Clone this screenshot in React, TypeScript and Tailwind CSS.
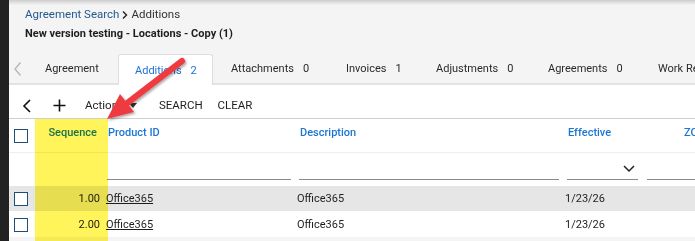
import React from "react";

const Checkbox = () => (
  <div className="w-[14px] h-[14px] border-[1.5px] border-[#1f4e79] bg-white" />
);

const tabs: { label: string; count?: string; w: string; active?: boolean }[] = [
  { label: "Agreement", w: "w-[91px]" },
  { label: "Additions", count: "2", w: "w-[95px]", active: true },
  { label: "Attachments", count: "0", w: "w-[115px]" },
  { label: "Invoices", count: "1", w: "w-[90px]" },
  { label: "Adjustments", count: "0", w: "w-[112px]" },
  { label: "Agreements", count: "0", w: "w-[110px]" },
  { label: "Work Requests", w: "w-[120px]" },
];

export default function App() {
  return (
    <div
      className="w-[695px] h-[241px] overflow-hidden flex relative bg-[#f4f4f4]"
      style={{ fontFamily: "Roboto, 'Liberation Sans', sans-serif" }}
    >
      <div className="w-[9px] shrink-0 bg-[#222222]" />
      <div className="flex-1 flex flex-col min-w-0">
        <div className="h-[5px] shrink-0 bg-gradient-to-b from-[#cdcdcd] to-[#f4f4f4]" />
        {/* breadcrumb */}
        <div className="pl-[16px] h-[20px] flex items-center text-[11.5px] text-[#333] leading-none">
          <span className="text-[#24598c]">Agreement Search</span>
          <svg width="10" height="10" viewBox="0 0 10 10" className="mx-[1px]">
            <path d="M3 1.5 L6.5 5 L3 8.5" fill="none" stroke="#222" strokeWidth="1.4" />
          </svg>
          <span>Additions</span>
        </div>
        <div className="pl-[16px] h-[16px] flex items-center text-[11px] font-bold text-[#1e1e1e] leading-none">
          New version testing - Locations - Copy (1)
        </div>
        {/* tabs */}
        <div className="mt-[13px] h-[31px] flex items-stretch border-b-[2px] border-[#e3e3e3] shrink-0">
          <div className="w-[18px] shrink-0 flex items-center justify-center">
            <svg width="10" height="16" viewBox="0 0 10 16">
              <path d="M7.5 1.5 L2 8 L7.5 14.5" fill="none" stroke="#b5b5b5" strokeWidth="1.3" />
            </svg>
          </div>
          {tabs.map((t) => (
            <div
              key={t.label}
              className={`${t.w} shrink-0 flex items-center text-[11px] whitespace-nowrap pt-[2px] ${
                t.active
                  ? "bg-white border border-b-0 border-[#dedede] rounded-t-[3px] pl-[16px] text-[#1a73d4] -mb-[2px]"
                  : "pl-[18px] text-[#2a2a2a]"
              }`}
            >
              <span>{t.label}</span>
              {t.count && <span className="ml-[9px]">{t.count}</span>}
            </div>
          ))}
        </div>
        {/* content */}
        <div className="flex-1 bg-white flex flex-col">
          {/* toolbar */}
          <div className="h-[34px] border-b border-[#cfcfcf] flex items-center text-[11.5px] text-[#1e1e1e] shrink-0 pt-[8px]">
            <div className="w-[13px]" />
            <svg width="10" height="14" viewBox="0 0 10 14">
              <path d="M8 1 L2 7 L8 13" fill="none" stroke="#111" strokeWidth="1.6" />
            </svg>
            <div className="w-[21px]" />
            <svg width="13" height="13" viewBox="0 0 13 13">
              <path d="M6.5 0.5 V12.5 M0.5 6.5 H12.5" fill="none" stroke="#111" strokeWidth="1.6" />
            </svg>
            <span className="ml-[19px]">Actions</span>
            <svg width="8" height="6" viewBox="0 0 8 6" className="ml-[5px]">
              <path d="M0 0 L8 0 L4 5 Z" fill="#333" />
            </svg>
            <span className="ml-[22px]">SEARCH</span>
            <span className="ml-[15px]">CLEAR</span>
          </div>
          {/* header */}
          <div className="h-[34px] flex items-center border-b border-[#eeeeee] text-[11px] font-medium text-[#1a76d2] shrink-0 pb-[4px]">
            <div className="w-[26px] shrink-0 flex justify-center">
              <div className="ml-[-3px] mt-[4px]"><Checkbox /></div>
            </div>
            <div className="w-[73px] shrink-0 text-right pr-[11px]">Sequence</div>
            <div className="w-[192px] shrink-0">Product ID</div>
            <div className="w-[268px] shrink-0">Description</div>
            <div className="w-[116px] shrink-0">Effective</div>
            <div>ZO</div>
          </div>
          {/* filters */}
          <div className="h-[33px] flex items-end pb-[6px] shrink-0">
            <div className="w-[98px] shrink-0" />
            <div className="w-[184px] shrink-0 border-b border-[#8a8a8a]" />
            <div className="w-[8px] shrink-0" />
            <div className="w-[260px] shrink-0 border-b border-[#8a8a8a]" />
            <div className="w-[8px] shrink-0" />
            <div className="w-[71px] shrink-0 border-b border-[#8a8a8a] h-[22px] flex items-center justify-end pr-[3px]">
              <svg width="12" height="8" viewBox="0 0 12 8">
                <path d="M1 1 L6 6 L11 1" fill="none" stroke="#222" strokeWidth="1.5" />
              </svg>
            </div>
            <div className="w-[9px] shrink-0" />
            <div className="flex-1 border-b border-[#8a8a8a]" />
          </div>
          {/* rows */}
          {["1.00", "2.00"].map((s, i) => (
            <div
              key={s}
              className={`h-[25px] flex items-center text-[11px] text-[#1e1e1e] shrink-0 pt-[2px] ${
                i === 0 ? "bg-[#e6e6e6] mb-[1px]" : "bg-white"
              }`}
            >
              <div className="w-[26px] shrink-0 flex justify-center">
                <div className="ml-[-3px] mt-[-1px]"><Checkbox /></div>
              </div>
              <div className="w-[65px] shrink-0 text-right">{s}</div>
              <div className="w-[6px] shrink-0" />
              <div className="w-[191px] shrink-0 underline">Office365</div>
              <div className="w-[268px] shrink-0">Office365</div>
              <div className="shrink-0">1/23/26</div>
            </div>
          ))}
          <div className="flex-1 bg-[#f4f4f4]" />
        </div>
      </div>

      {/* yellow highlight annotation */}
      <div className="absolute left-[35px] top-[119px] w-[73px] h-[122px] bg-[#fff55a] mix-blend-multiply pointer-events-none" />

      {/* red arrow annotation */}
      <svg
        className="absolute left-0 top-0 pointer-events-none"
        width="695"
        height="241"
        viewBox="0 0 695 241"
      >
        <defs>
          <filter id="sh" x="-20%" y="-20%" width="140%" height="140%">
            <feDropShadow dx="1.5" dy="1.5" stdDeviation="1.2" floodColor="#000" floodOpacity="0.35" />
          </filter>
        </defs>
        <g filter="url(#sh)">
          <line x1="182" y1="61" x2="126" y2="104" stroke="#ee3b40" strokeWidth="6" strokeLinecap="round" />
          <polygon points="107,119 120,94 134,112" fill="#ee3b40" />
        </g>
      </svg>
    </div>
  );
}
